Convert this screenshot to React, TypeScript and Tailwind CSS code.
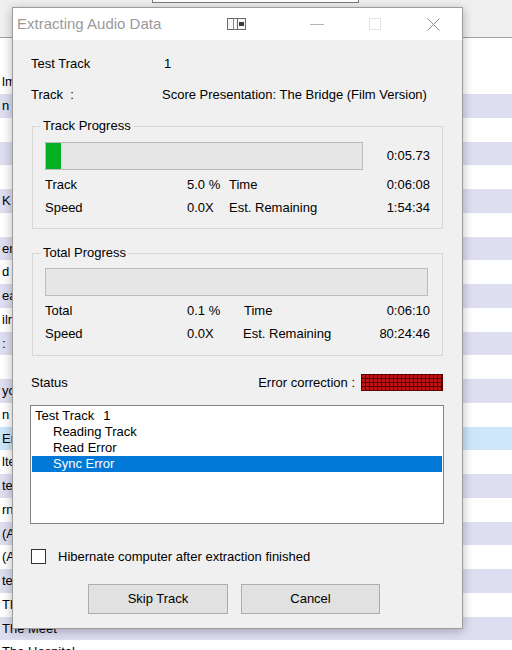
import React from "react";

const bgRows: string[] = [
  "lm",
  "n V",
  "",
  "",
  "",
  "K",
  "",
  "er",
  "d I",
  "eac",
  "ilr",
  ":",
  "",
  "yc",
  "n",
  "Er",
  "lte",
  "ter",
  "rn",
  "(A",
  "(A",
  "ter",
  "Th",
  "The Meet",
  "The Hospital",
];

function Led() {
  const dots: React.ReactNode[] = [];
  for (let r = 0; r < 4; r++) {
    for (let c = 0; c < 20; c++) {
      dots.push(
        <rect key={`${r}-${c}`} x={1 + c * 4} y={1 + r * 4} width={3} height={3} fill="#c01414" />
      );
    }
  }
  return (
    <svg width="82" height="17" viewBox="0 0 82 17" className="block">
      <rect x="0" y="0" width="82" height="17" fill="#560404" />
      {dots}
    </svg>
  );
}

function SnapIcon() {
  return (
    <svg width="20" height="12" viewBox="0 0 20 12" className="block">
      <rect x="0.5" y="0.5" width="18" height="11" fill="#f6f6f6" stroke="#6a6a6a" />
      <line x1="6.5" y1="1" x2="6.5" y2="11" stroke="#8a8a8a" />
      <line x1="10.5" y1="1" x2="10.5" y2="11" stroke="#6a6a6a" />
      <rect x="12" y="4" width="5" height="4" fill="#3c3c3c" />
    </svg>
  );
}

function Bar({ width, fill }: { width: number; fill: number }) {
  return (
    <div
      className="h-[28px] border border-[#bcbcbc] bg-[#e6e6e6] flex"
      style={{ width }}
    >
      {fill > 0 && <div className="h-full bg-[#06b025]" style={{ width: fill }} />}
    </div>
  );
}

export default function App() {
  return (
    <div className="relative w-[512px] h-[650px] overflow-hidden bg-white font-['Liberation_Sans',Arial,sans-serif] text-[13px] text-black">
      {/* background window */}
      <div className="h-[38px] bg-[#f0f0f0] border-b border-[#a0a0a0]">
        <div className="ml-[152px] w-[207px] h-[3px] bg-white border-x border-b border-[#7a7a7a]" />
      </div>
      <div className="h-[32.25px] bg-white" />
      {bgRows.map((t, i) => (
        <div
          key={i}
          className={
            "h-[23.75px] leading-[23.75px] pl-[2px] whitespace-nowrap text-[13px] " +
            (i === 15 ? "bg-[#cde6f9]" : i % 2 === 1 ? "bg-[#dedef1]" : "bg-white")
          }
        >
          {t}
        </div>
      ))}

      {/* dialog */}
      <div className="absolute left-[12px] top-[7px] w-[451px] h-[622px] border border-[#9d9d9d] bg-[#f0f0f0] shadow-[0_2px_10px_rgba(0,0,0,0.28)] flex flex-col">
        <div className="h-[32px] bg-white flex items-center shrink-0">
          <span className="pl-[4px] w-[214px] text-[15px] text-[#9a9a9a] whitespace-nowrap">
            Extracting Audio Data
          </span>
          <SnapIcon />
          <div className="flex-1" />
          <div className="w-[58px] h-full flex items-center justify-center">
            <div className="w-[14px] h-px bg-[#b4b4b4]" />
          </div>
          <div className="w-[58px] h-full flex items-center justify-center">
            <div className="w-[12px] h-[12px] border border-[#e4e4e4]" />
          </div>
          <div className="w-[58px] h-full flex items-center justify-center">
            <svg width="13" height="13" viewBox="0 0 13 13" className="block">
              <path d="M0.5 0.5 L12.5 12.5 M12.5 0.5 L0.5 12.5" stroke="#8e8e8e" strokeWidth="1" fill="none" />
            </svg>
          </div>
        </div>

        <div className="flex-1 flex flex-col leading-[16px]">
          <div className="mt-[16px] ml-[18px] flex">
            <span className="w-[133px]">Test Track</span>
            <span>1</span>
          </div>
          <div className="mt-[15px] ml-[18px] flex whitespace-nowrap">
            <span className="w-[131px]">Track&nbsp; :</span>
            <span>Score Presentation: The Bridge (Film Version)</span>
          </div>

          <fieldset className="mt-[15px] mx-[19px] border border-[#d7d7d7] min-w-0">
            <legend className="ml-[8px] px-[2px] leading-[16px]">Track Progress</legend>
            <div className="px-[12px] pb-[9px]">
              <div className="mt-[8px] flex items-center justify-between">
                <Bar width={318} fill={15} />
                <span>0:05.73</span>
              </div>
              <div className="mt-[3px] flex h-[23px] items-center">
                <span className="w-[142px]">Track</span>
                <span className="w-[42px]">5.0 %</span>
                <span className="flex-1">Time</span>
                <span>0:06:08</span>
              </div>
              <div className="flex h-[23px] items-center">
                <span className="w-[142px]">Speed</span>
                <span className="w-[42px]">0.0X</span>
                <span className="flex-1">Est. Remaining</span>
                <span>1:54:34</span>
              </div>
            </div>
          </fieldset>

          <fieldset className="mt-[16px] mx-[19px] border border-[#d7d7d7] min-w-0">
            <legend className="ml-[8px] px-[2px] leading-[16px]">Total Progress</legend>
            <div className="px-[12px] pb-[10px]">
              <div className="mt-[7px] flex items-center">
                <Bar width={383} fill={0} />
              </div>
              <div className="mt-[3px] flex h-[23px] items-center">
                <span className="w-[142px]">Total</span>
                <span className="w-[57px]">0.1 %</span>
                <span className="flex-1">Time</span>
                <span>0:06:10</span>
              </div>
              <div className="flex h-[23px] items-center">
                <span className="w-[142px]">Speed</span>
                <span className="w-[56px]">0.0X</span>
                <span className="flex-1">Est. Remaining</span>
                <span>80:24:46</span>
              </div>
            </div>
          </fieldset>

          <div className="mt-[18px] ml-[18px] mr-[19px] h-[17px] flex items-center">
            <span className="flex-1">Status</span>
            <span className="mr-[6px]">Error correction :</span>
            <Led />
          </div>

          <div className="mt-[14px] ml-[17px] w-[414px] h-[119px] border border-[#828282] bg-white px-px pt-[2px]">
            <div className="h-[16px] pl-[3px] whitespace-pre">
              Test Track<span className="ml-[9px]">1</span>
            </div>
            <div className="h-[16px] pl-[21px]">Reading Track</div>
            <div className="h-[16px] pl-[21px]">Read Error</div>
            <div className="h-[16px] pl-[21px] bg-[#0078d7] text-white">Sync Error</div>
          </div>

          <div className="mt-[25px] ml-[18px] h-[15px] flex items-center">
            <div className="w-[15px] h-[15px] border border-[#333333] bg-white" />
            <span className="ml-[12px]">Hibernate computer after extraction finished</span>
          </div>

          <div className="mt-[20px] ml-[75px] flex gap-[13px]">
            <div className="w-[140px] h-[30px] border border-[#adadad] bg-[#e1e1e1] flex items-center justify-center">
              Skip Track
            </div>
            <div className="w-[139px] h-[30px] border border-[#adadad] bg-[#e1e1e1] flex items-center justify-center">
              Cancel
            </div>
          </div>
        </div>
      </div>
    </div>
  );
}
